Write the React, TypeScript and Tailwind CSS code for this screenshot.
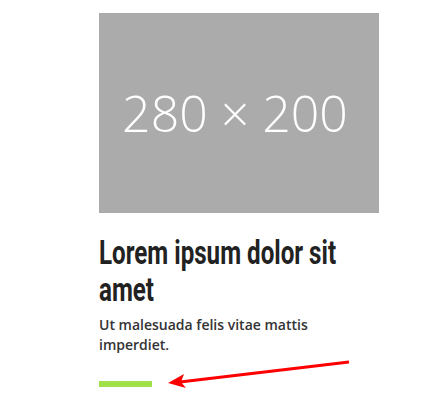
export default function App() {
  const titleFont = { fontFamily: 'Roboto, "Liberation Sans", sans-serif' };
  return (
    <div className="relative w-[447px] h-[405px] bg-white">
      <div className="pl-[99px] pt-[13px] w-[379px]">
        <div className="w-[280px] h-[200px] bg-[#ababab] flex items-center justify-center pr-[8px]">
          <span className="text-white text-[50px] font-light leading-none" style={{ fontFamily: '"Open Sans", sans-serif' }}>
            280 × 200
          </span>
        </div>
        <h2 className="mt-[21px] text-[34px] leading-[37px] font-bold text-[#222] whitespace-nowrap" style={titleFont}>
          <span className="block origin-left scale-x-[0.71]">Lorem ipsum dolor sit</span>
          <span className="block origin-left scale-x-[0.71]">amet</span>
        </h2>
        <p className="mt-[7px] text-[14px] leading-[20px] font-semibold text-[#333]" style={{ fontFamily: '"Open Sans", sans-serif' }}>
          Ut malesuada felis vitae mattis imperdiet.
        </p>
        <div className="mt-[26px] w-[53px] h-[6px] bg-[#a0e04a]" />
      </div>
      <svg className="absolute left-0 top-0" width="447" height="405" viewBox="0 0 447 405">
        <line x1="349" y1="362" x2="180" y2="382" stroke="#ff0000" strokeWidth="3" />
        <polygon points="168,383 184,374 181,382 186,388" fill="#ff0000" />
      </svg>
    </div>
  );
}
